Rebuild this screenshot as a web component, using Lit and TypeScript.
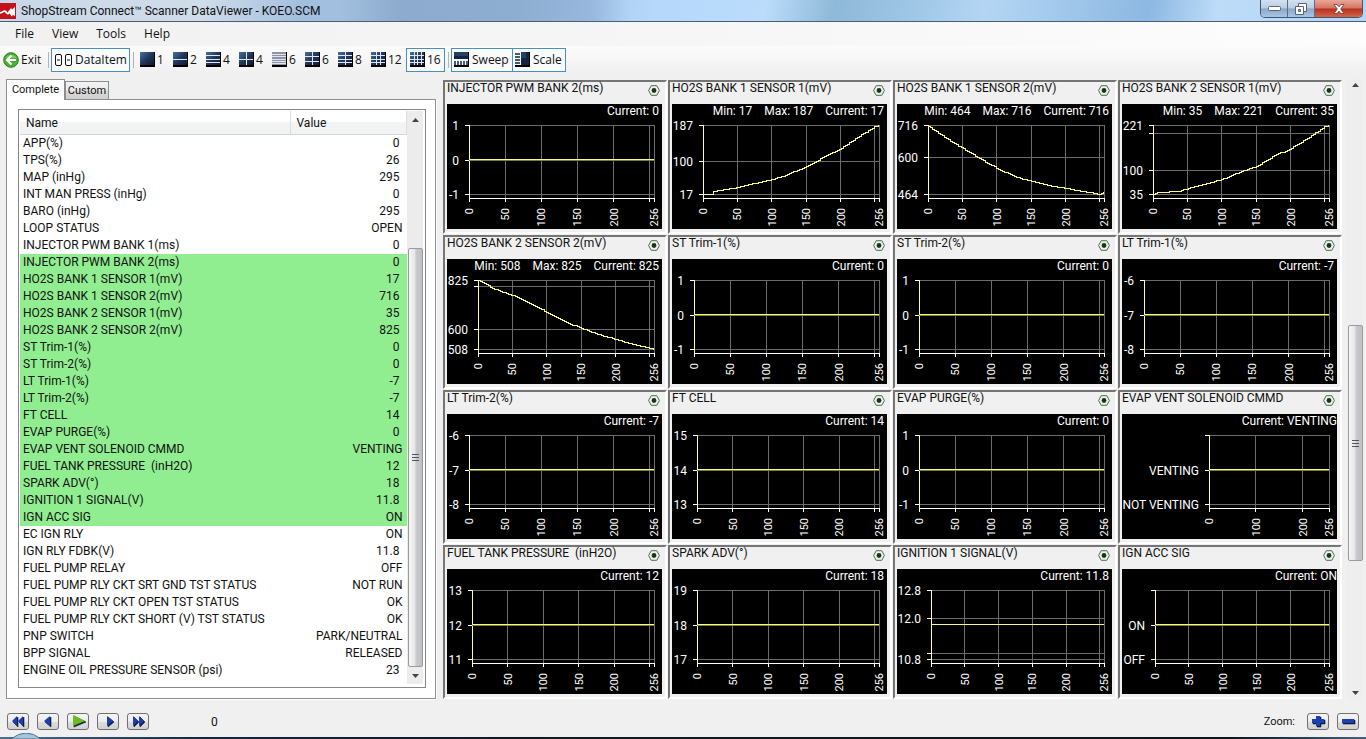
import { LitElement, html, svg, css, nothing } from "lit";
import { customElement, property } from "lit/decorators.js";

type Point = [number, number];
interface Tick { at: number; label?: string }
interface Graph {
  name: string;
  stats: string[];
  word?: boolean;
  inset: number;
  ticks: Tick[];
  trace: Point[];
  coarse?: boolean;
}

const flat = (y = 34): Point[] => [[0, y], [256, y]];
const three = (top: string, mid: string, low: string): Tick[] => [
  { at: 0, label: top }, { at: 35, label: mid }, { at: 69, label: low },
];

const GRAPHS: Graph[] = [
  { name: "INJECTOR PWM BANK 2(ms)", stats: ["Current: 0"], inset: 22, ticks: three("1", "0", "-1"), trace: flat() },
  { name: "HO2S BANK 1 SENSOR 1(mV)", stats: ["Min: 17", "Max: 187", "Current: 17"], inset: 31,
    ticks: [{ at: 0, label: "187" }, { at: 36, label: "100" }, { at: 69, label: "17" }],
    trace: [[0, 69], [12, 69], [15, 66], [50, 62], [75, 58], [100, 54], [120, 50], [150, 41], [175, 32], [200, 23], [225, 12], [250, 1], [256, 0]] },
  { name: "HO2S BANK 1 SENSOR 2(mV)", stats: ["Min: 464", "Max: 716", "Current: 716"], inset: 31,
    ticks: [{ at: 0, label: "716" }, { at: 32, label: "600" }, { at: 69, label: "464" }],
    trace: [[0, 1], [25, 12], [50, 23], [75, 33], [100, 43], [125, 51], [150, 56], [175, 60], [200, 63], [225, 66], [250, 69], [256, 67]] },
  { name: "HO2S BANK 2 SENSOR 1(mV)", stats: ["Min: 35", "Max: 221", "Current: 35"], inset: 31,
    ticks: [{ at: 0, label: "221" }, { at: 8 }, { at: 45, label: "100" }, { at: 69, label: "35" }],
    trace: [[0, 69], [5, 67], [38, 66], [50, 63], [75, 59], [100, 54], [125, 47], [150, 41], [175, 31], [200, 23], [225, 13], [250, 1], [256, 0]] },
  { name: "HO2S BANK 2 SENSOR 2(mV)", stats: ["Min: 508", "Max: 825", "Current: 825"], inset: 31,
    ticks: [{ at: 0, label: "825" }, { at: 6 }, { at: 49, label: "600" }, { at: 69, label: "508" }],
    trace: [[0, 0], [8, 3], [25, 9], [50, 15], [75, 23], [100, 32], [125, 41], [150, 48], [175, 54], [200, 59], [225, 64], [250, 68], [256, 69]] },
  { name: "ST Trim-1(%)", stats: ["Current: 0"], inset: 22, ticks: three("1", "0", "-1"), trace: flat() },
  { name: "ST Trim-2(%)", stats: ["Current: 0"], inset: 22, ticks: three("1", "0", "-1"), trace: flat() },
  { name: "LT Trim-1(%)", stats: ["Current: -7"], inset: 22, ticks: three("-6", "-7", "-8"), trace: flat() },
  { name: "LT Trim-2(%)", stats: ["Current: -7"], inset: 22, ticks: three("-6", "-7", "-8"), trace: flat() },
  { name: "FT CELL", stats: ["Current: 14"], inset: 25, ticks: three("15", "14", "13"), trace: flat() },
  { name: "EVAP PURGE(%)", stats: ["Current: 0"], inset: 22, ticks: three("1", "0", "-1"), trace: flat() },
  { name: "EVAP VENT SOLENOID CMMD", stats: ["Current: VENTING"], word: true, inset: 87, coarse: true,
    ticks: [{ at: 0 }, { at: 35, label: "VENTING" }, { at: 69, label: "NOT VENTING" }], trace: flat() },
  { name: "FUEL TANK PRESSURE  (inH2O)", stats: ["Current: 12"], inset: 25, ticks: three("13", "12", "11"), trace: flat() },
  { name: "SPARK ADV(°)", stats: ["Current: 18"], inset: 25, ticks: three("19", "18", "17"), trace: flat() },
  { name: "IGNITION 1 SIGNAL(V)", stats: ["Current: 11.8"], inset: 34,
    ticks: [{ at: 0, label: "12.8" }, { at: 28, label: "12.0" }, { at: 63 }, { at: 69, label: "10.8" }], trace: flat() },
  { name: "IGN ACC SIG", stats: ["Current: ON"], word: true, inset: 33,
    ticks: [{ at: 0 }, { at: 35, label: "ON" }, { at: 69, label: "OFF" }], trace: flat() },
];

const ITEMS: [string, string][] = [
  ["APP(%)", "0"], ["TPS(%)", "26"], ["MAP (inHg)", "295"], ["INT MAN PRESS (inHg)", "0"], ["BARO (inHg)", "295"],
  ["LOOP STATUS", "OPEN"], ["INJECTOR PWM BANK 1(ms)", "0"], ["INJECTOR PWM BANK 2(ms)", "0"],
  ["HO2S BANK 1 SENSOR 1(mV)", "17"], ["HO2S BANK 1 SENSOR 2(mV)", "716"], ["HO2S BANK 2 SENSOR 1(mV)", "35"],
  ["HO2S BANK 2 SENSOR 2(mV)", "825"], ["ST Trim-1(%)", "0"], ["ST Trim-2(%)", "0"], ["LT Trim-1(%)", "-7"],
  ["LT Trim-2(%)", "-7"], ["FT CELL", "14"], ["EVAP PURGE(%)", "0"], ["EVAP VENT SOLENOID CMMD", "VENTING"],
  ["FUEL TANK PRESSURE  (inH2O)", "12"], ["SPARK ADV(°)", "18"], ["IGNITION 1 SIGNAL(V)", "11.8"],
  ["IGN ACC SIG", "ON"], ["EC IGN RLY", "ON"], ["IGN RLY FDBK(V)", "11.8"], ["FUEL PUMP RELAY", "OFF"],
  ["FUEL PUMP RLY CKT SRT GND TST STATUS", "NOT RUN"], ["FUEL PUMP RLY CKT OPEN TST STATUS", "OK"],
  ["FUEL PUMP RLY CKT SHORT (V) TST STATUS", "OK"], ["PNP SWITCH", "PARK/NEUTRAL"], ["BPP SIGNAL", "RELEASED"],
  ["ENGINE OIL PRESSURE SENSOR (psi)", "23"],
];

function steps(points: Point[]): string {
  if (points.length === 2) return `M0 ${points[0][1]}H256`;
  let d = `M0 ${points[0][1]}`;
  let i = 0;
  for (let x = 3; x <= 256; x += 3) {
    while (i < points.length - 2 && points[i + 1][0] < x) i++;
    const [x0, y0] = points[i];
    const [x1, y1] = points[i + 1];
    d += `H${x}V${Math.round(y0 + ((y1 - y0) * (x - x0)) / (x1 - x0))}`;
  }
  return d + "H256";
}

@customElement("sensor-graph")
class SensorGraph extends LitElement {
  @property({ attribute: false }) graph!: Graph;

  static styles = css`
    :host { display: block; min-width: 0; border: 2px solid; border-color: #757575 #fff #fff #757575; padding: 0 3px 3px 2px; }
    .head { display: flex; justify-content: space-between; height: 22px; }
    .name { font-size: 12px; line-height: 13px; font-weight: 400; margin: 0; white-space: pre; color: #111; }
    .mark { background: none; border: 0; padding: 3px 2px 0 0; width: 14px; height: 14px; }
    .mark svg { display: block; }
    .screen { background: #000; height: 125px; color: #fff; display: flex; flex-direction: column; }
    .stats { display: flex; justify-content: flex-end; gap: 12px; padding-right: 3px; line-height: 15px; height: 21px; font-size: 12px; }
    .stats.word { padding-right: 0; }
    .plot { display: block; overflow: visible; height: 104px; margin-right: 8px; font-size: 12px; fill: #fff; }
    .wave, .label { overflow: visible; }
    .label { font-size: 11px; }
    .grid { stroke: #6c6c6c; shape-rendering: crispEdges; }
    .axis { stroke: #fff; shape-rendering: crispEdges; }
    .yaxis { stroke: #ffffa0; shape-rendering: crispEdges; }
    .under { stroke: #7c7c38; shape-rendering: crispEdges; }
    .trace { stroke: #fafa82; fill: none; shape-rendering: crispEdges; vector-effect: non-scaling-stroke; }
  `;

  render() {
    const g = this.graph;
    const marks = g.coarse ? [0, 100, 200, 256] : [0, 50, 100, 150, 200, 250, 256];
    const isFlat = g.trace.length === 2;
    return html`
      <div class="head">
        <h2 class="name">${g.name}</h2>
        <button class="mark" aria-label="Trigger for ${g.name}">
          <svg width="12" height="11" viewBox="0 0 12 11">
            <path d="M3.2.7h5.6L11.4 5.5 8.8 10.3H3.2L.6 5.5z" fill="#eaf4ea" stroke="#4c6c4d" />
            <circle cx="6" cy="5.5" r="2.4" fill="#1c341f" />
          </svg>
        </button>
      </div>
      <div class="screen">
        <div class="stats ${g.word ? "word" : ""}">${g.stats.map((s) => html`<span>${s}</span>`)}</div>
        <svg class="plot" style="margin-left:${g.inset}px">
          ${marks.filter((v) => v > 0).map((v) => {
            const x = `${(v / 256) * 100}%`;
            return svg`<line class="grid" x1=${x} x2=${x} y1="0" y2="73"/>`;
          })}
          ${g.ticks.map((t) => svg`
            <line class="grid" x1="0" x2="100%" y1=${t.at + 0.5} y2=${t.at + 0.5}/>
            <line class="axis" x1="-4" x2="1" y1=${t.at + 0.5} y2=${t.at + 0.5}/>
            ${t.label ? svg`<text x="-10" y=${t.at + 5} text-anchor="end">${t.label}</text>` : nothing}`)}
          <line class="axis" x1="0" x2="100%" y1="73.5" y2="73.5"/>
          ${marks.map((v) => {
            const x = `${(v / 256) * 100}%`;
            return svg`
              <line class="axis" x1=${x} x2=${x} y1="73" y2="77"/>
              ${v === 250 ? nothing : svg`<svg class="label" x=${x} y="83"><text transform="rotate(-90)" x="0" y="4" text-anchor="end">${v}</text></svg>`}`;
          })}
          <line class="yaxis" x1="0.5" x2="0.5" y1="0" y2="73"/>
          ${isFlat && g.ticks.some((t) => t.at === 35) ? svg`<line class="under" x1="0" x2="100%" y1="35.5" y2="35.5"/>` : nothing}
          <svg class="wave" width="100%" height="70" viewBox="0 0 256 70" preserveAspectRatio="none">
            <path class="trace" transform="translate(0 0.5)" d=${steps(g.trace)}/>
          </svg>
        </svg>
      </div>`;
  }
}

/* Window-layout glyph: a shaded screen split into columns and rows. */
const glyph = (cols: number, rows: number, pale = false) => {
  const w = 14 / cols;
  const h = 13 / rows;
  const id = pale ? "mist" : "navy";
  const lines = [];
  for (let c = 1; c < cols; c++) lines.push(svg`<rect x=${Math.round(c * w)} y="0" width="1" height="13" fill="#dfe7f0"/>`);
  for (let r = 1; r < rows; r++) lines.push(svg`<rect x="0" y=${Math.round(r * h)} width="14" height="1" fill="#dfe7f0"/>`);
  return html`<svg class="glyph" width="16" height="15" viewBox="0 0 16 15" shape-rendering="crispEdges">
    <defs><linearGradient id=${id} x1="0" y1="0" x2="1" y2="1">
      <stop offset="0" stop-color=${pale ? "#8f96b4" : "#4a72a4"}/><stop offset=".5" stop-color=${pale ? "#8e90a0" : "#22375c"}/><stop offset="1" stop-color=${pale ? "#9c9ca0" : "#101a30"}/>
    </linearGradient></defs>
    <rect width="13.500" height="13" fill="url(#${id})"/>${lines}
    <path d="M14.500 0V14.500M0 14H15" stroke="#000" stroke-width="1.500" fill="none"/></svg>`;
};

const sweepGlyph = html`<svg class="glyph" width="16" height="15" viewBox="0 0 16 15" shape-rendering="crispEdges">
  <rect width="14" height="7" fill="#22406a"/><path d="M0 4H14V7H0z" fill="#14243f"/><path d="M0 8H14" stroke="#e8eef4"/>
  <path d="M1 13V9M4 13V9M7 13V9M10 13V9M13 13V9" stroke="#4a5a74" stroke-width="2"/>
  <path d="M14.500 0V14.500M0 14H15" stroke="#000" stroke-width="1.500"/></svg>`;
const scaleGlyph = html`<svg class="glyph" width="16" height="15" viewBox="0 0 16 15" shape-rendering="crispEdges">
  <path d="M0 1.500H5M0 4.500H5M0 7.500H5M0 10.500H5" stroke="#4a5a74" stroke-width="2"/>
  <rect x="6" width="8" height="13" fill="#14243f"/><rect x="6" width="5" height="6" fill="#22406a"/>
  <path d="M14.500 0V14.500M0 14H15" stroke="#000" stroke-width="1.500"/></svg>`;

const LAYOUTS: [string, number, number, boolean?][] = [
  ["1", 1, 1], ["2", 1, 2], ["4", 1, 4], ["4", 2, 2], ["6", 1, 6, true], ["6", 2, 3], ["8", 2, 4], ["12", 3, 4], ["16", 4, 4],
];

const tri = (d: string, fill = "#1c3fb4") => html`<svg width="16" height="13" viewBox="0 0 16 13">
  <path d=${d} transform="translate(1 1)" fill="#111c38" stroke="#111c38" stroke-width=".6"/><path d=${d} fill=${fill} /></svg>`;

const PLAYBACK = [
  { label: "Rewind", icon: tri("M7 1v10L2 6zM13 1v10L8 6z") },
  { label: "Step back", icon: tri("M10 1v10L4 6z") },
  { label: "Play", icon: tri("M3 0v11L15 6z", "#6cbc24") },
  { label: "Step forward", icon: tri("M7 1v10l6-5z") },
  { label: "Fast forward", icon: tri("M3 1v10l5-5zM9 1v10l5-5z") },
];

@customElement("app-root")
class AppRoot extends LitElement {
  static styles = css`
    * { box-sizing: border-box; }
    :host { display: flex; flex-direction: column; min-height: 100vh; background: #f0f0f0; color: #111; font-family: Roboto, "Liberation Sans", sans-serif; font-size: 12px; overflow: hidden; }
    button { font: inherit; color: inherit; margin: 0; }
    svg { display: block; flex: none; }
    .ui { font-family: "Open Sans", "Noto Sans", sans-serif; font-size: 12px; }

    .title { display: flex; height: 22px; border-bottom: 1px solid #4a5c78; background:
      linear-gradient(90deg, transparent 340px, #5d7ba04d 400px, #5d7ba040 590px, transparent 630px),
      linear-gradient(100deg, #c9d8e8 0, #cfdcea 15%, #a3bfde 22%, #9fc0e4 38%, #b5d8fb 48%, #bbdcfb 56%, #8fb9d8 61%, #9cc4e4 66%, #b4d6f4 72%, #8db8e2 84%, #bcdcf8 89%, #b4d6f6 100%); }
    .title h1 { flex: 1; margin: 0 0 0 5px; font-size: 12px; font-weight: 400; line-height: 22px; white-space: nowrap; }
    .logo { margin-top: 3px; }
    .caption { display: flex; height: 18px; margin-right: 3px; border: 1px solid #44546c; border-top: 0; border-radius: 0 0 5px 5px; overflow: hidden; }
    .caption button { width: 27px; border: 0; border-right: 1px solid #5c6c84; padding: 0; display: grid; place-items: center; background: linear-gradient(#d3e1f0, #b9cce2 48%, #8ba6c6 52%, #a9c6e4); }
    .caption .close { width: 47px; border-right: 0; background: linear-gradient(#e9a898, #d67262 48%, #b8301c 52%, #d2664c); }

    .menu { display: flex; height: 24px; padding-left: 6px; background: linear-gradient(90deg, #f1f1f1, #f6f6f6 50%, #fdfdfd); }
    .menu button { background: none; border: 0; padding: 0 9px; height: 23px; }
    .tools { display: flex; align-items: center; height: 27px; padding-left: 2px; background: linear-gradient(#fcfcfc, #f0f0f0); }
    .tool { display: flex; align-items: center; gap: 2px; height: 24px; padding: 0 4px; border: 1px solid transparent; background: none; white-space: nowrap; }
    .tool.layout { width: 33px; padding: 0 0 0 3px; gap: 1px; }
    .tool.wide { width: 39px; }
    .tool.on { border-color: #4c8fbf; background: #f8fafc; }
    .tool.layout.on { width: 39px; }
    .tool.exit { padding: 0; gap: 2px; width: 45px; }
    .tool.data { width: 79px; padding: 0 3px; gap: 3px; }
    .tool.sweep { width: 62px; padding: 0 2px; }
    .tool.scale { width: 54px; padding: 0 2px; margin-left: -1px; }
    .sep { width: 1px; height: 16px; background: #b4b4b4; }
    .sep.first { margin: 0 2px 0 1px; }
    .sep.second { margin: 0 2px 0 3px; }

    .body { display: grid; grid-template-columns: 436px minmax(0, 1fr) 24px; flex: 1; padding-top: 6px; }
    .side { display: flex; flex-direction: column; padding-left: 6px; }
    .tabs { display: flex; align-items: flex-end; height: 20px; font-size: 11px; }
    .tab { border: 1px solid #8c8e94; border-bottom: 0; padding: 0; height: 18px; width: 44px; line-height: 17px; background: linear-gradient(#f3f3f3, #ebebeb 50%, #dadada 55%, #cfcfcf); }
    .tab.on { height: 21px; width: 59px; margin-bottom: -1px; padding-bottom: 2px; background: #fff; z-index: 1; }
    .pane { flex: 1; border: 1px solid #8c8e94; background: #fff; padding: 9px 9px 10px 11px; box-shadow: 1px 1px #fff; }
    .list { height: 100%; display: flex; border: 1px solid #828790; padding: 1px 2px 3px 1px; }
    table { flex: 1; align-self: flex-start; border-collapse: collapse; table-layout: fixed; }
    thead th { height: 23px; padding: 2px 0 0 6px; text-align: left; font-weight: 400; border-right: 1px solid #dcdddf; border-bottom: 1px solid #d5d5d5; background: linear-gradient(#fff 45%, #f3f4f6 50%, #f1f2f4); }
    .c1 { width: 270px; }
    .gap td { height: 1px; padding: 0; line-height: 1px; }
    tbody td { height: 17px; padding: 0 0 0 3px; line-height: 16px; white-space: pre; vertical-align: top; }
    tbody td.v { text-align: right; padding-right: 4px; }
    tbody td.num { padding-right: 7px; }
    .sel td { background: #90ee90; }

    .bar { display: flex; flex-direction: column; width: 16px; background: #ececec; align-items: center; }
    .bar .up, .bar .down { height: 17px; display: grid; place-items: center; flex: none; }
    .thumb { width: 15px; border: 1px solid #9a9a9a; border-radius: 2px; background: linear-gradient(90deg, #f6f6f6, #e6e6e8 45%, #c8c9cc 55%, #bfc0c4); display: grid; place-items: center; }
    .grip { width: 7px; height: 7px; background: repeating-linear-gradient(#555 0 1px, transparent 1px 3px); }
    .list .before { flex: 121; }
    .list .thumb { flex: 422; }
    .right .before { flex: 229; }
    .right .thumb { flex: 229; }
    .right .after { flex: 123; }

    .graphs { display: grid; grid-template-columns: repeat(4, minmax(0, 1fr)); gap: 1px; padding: 1px 0 0 7px; align-content: start; }
    .right { margin: 0 0 0 5px; background: #eee; width: 16px; }
    .right .up { height: 12px; }
    .right .down { height: 12px; }

    .foot { display: flex; align-items: center; height: 38px; padding: 7px 7px 0; gap: 8px; }
    .key { width: 22px; height: 17px; padding: 0; display: grid; place-items: center; border: 1px solid #707070; border-radius: 3px; background: linear-gradient(#f4f4f4, #ececec 50%, #dcdcdc 52%, #d2d2d2); }
    .count { margin-left: 54px; flex: 1; }
    .zoom { margin-right: 4px; font-size: 11px; }
    .task { height: 2px; background: linear-gradient(90deg, #4a7090, #18243a 15%, #101820 40%, #0e141c 90%, #46607c); position: relative; }
    .orb { position: absolute; left: 11px; bottom: 0; }
  `;

  private arrow(up: boolean) {
    return html`<span class=${up ? "up" : "down"}><svg width="7" height="4" viewBox="0 0 7 4"><path d=${up ? "M3.500 0L7 4H0z" : "M0 0h7L3.500 4z"} fill="#444"/></svg></span>`;
  }

  render() {
    return html`
      <header class="title">
        <svg class="logo" width="16" height="16" viewBox="0 0 16 16">
          <rect width="16" height="16" fill="#c4121c"/>
          <path d="M0 9.500C2 11 3.500 6.500 5.500 8.500S8 12 10 8" fill="none" stroke="#fff" stroke-width="1.800"/>
          <path d="M8 9l3-4 1 1.500L15 4v9l-2-1-1.500 1.500L10 11z" fill="#fff"/>
        </svg>
        <h1>ShopStream Connect™ Scanner DataViewer - KOEO.SCM</h1>
        <div class="caption">
          <button aria-label="Minimize"><svg width="13" height="5"><rect x=".5" y=".5" width="12" height="4" rx="1" fill="#fff" stroke="#566478"/></svg></button>
          <button aria-label="Restore"><svg width="12" height="12" viewBox="0 0 12 12" fill="#fff" stroke="#566478"><path d="M3.500.500h8v8h-8z"/><path d="M.500 3.500h8v8h-8z"/><path d="M3.500 6.500h2v2h-2z" fill="#9ab"/></svg></button>
          <button class="close" aria-label="Close"><svg width="12" height="10" viewBox="0 0 12 10"><path d="M1 .500h3l2 2.300 2-2.300h3L7.700 5 11 9.500H8L6 7.200 4 9.500H1L4.300 5z" fill="#fff" stroke="#6a3a3c" stroke-width=".8"/></svg></button>
        </div>
      </header>
      <nav class="menu ui">${["File", "View", "Tools", "Help"].map((m) => html`<button>${m}</button>`)}</nav>
      <div class="tools ui">
        <button class="tool exit">
          <svg width="16" height="16" viewBox="0 0 16 16"><circle cx="8" cy="8" r="7.300" fill="#4cae34" stroke="#2f7d22"/><path d="M2.500 6a6 5 0 0 1 11 0z" fill="#8fd67a" opacity=".7"/><path d="M8.500 3.500L4 8l4.500 4.500M4.500 8H13" stroke="#fff" stroke-width="2" fill="none"/></svg>
          Exit</button>
        <span class="sep first"></span>
        <button class="tool data on">
          <svg width="17" height="12" viewBox="0 0 17 12" fill="none" stroke="#111"><rect x=".5" y=".5" width="6" height="11" rx="1.500"/><path d="M2 6h3M12 6h3"/><rect x="10.500" y=".5" width="6" height="11" rx="1.500"/></svg>
          DataItem</button>
        <span class="sep second"></span>
        ${LAYOUTS.map(([n, c, r, pale]) => html`<button class="tool layout ${n === "16" ? "on" : n === "12" ? "wide" : ""}">${glyph(c, r, pale)}${n}</button>`)}
        <span class="sep second"></span>
        <button class="tool sweep on">${sweepGlyph}Sweep</button>
        <button class="tool scale on">${scaleGlyph}Scale</button>
      </div>
      <main class="body">
        <section class="side">
          <div class="tabs" role="tablist">
            <button class="tab on" role="tab" aria-selected="true">Complete</button>
            <button class="tab" role="tab" aria-selected="false">Custom</button>
          </div>
          <div class="pane">
            <div class="list">
              <table>
                <thead><tr><th class="c1">Name</th><th>Value</th></tr></thead>
                <tbody>
                  <tr class="gap"><td colspan="2"></td></tr>
                  ${ITEMS.map(([n, v], i) => html`<tr class=${i >= 7 && i <= 22 ? "sel" : ""}><td>${n}</td><td class="v ${/\d/.test(v) ? "num" : ""}">${v}</td></tr>`)}
                </tbody>
              </table>
              <div class="bar">${this.arrow(true)}<div class="before"></div><div class="thumb"><div class="grip"></div></div>${this.arrow(false)}</div>
            </div>
          </div>
        </section>
        <section class="graphs">${GRAPHS.map((g) => html`<sensor-graph .graph=${g}></sensor-graph>`)}</section>
        <div class="bar right">${this.arrow(true)}<div class="before"></div><div class="thumb"><div class="grip"></div></div><div class="after"></div>${this.arrow(false)}</div>
      </main>
      <footer class="foot">
        ${PLAYBACK.map((b) => html`<button class="key" aria-label=${b.label}>${b.icon}</button>`)}
        <span class="count">0</span>
        <span class="zoom">Zoom:</span>
        <button class="key" aria-label="Zoom in">${tri("M6 1h4v3h4v4h-4v3H6V8H2V4h4z")}</button>
        <button class="key" aria-label="Zoom out">${tri("M2 4h12v4H2z")}</button>
      </footer>
      <div class="task"><svg class="orb" width="30" height="6" viewBox="0 0 30 6"><path d="M0 6Q15-6 30 6z" fill="#a8c4d8" stroke="#4a7090"/></svg></div>
    `;
  }
}
